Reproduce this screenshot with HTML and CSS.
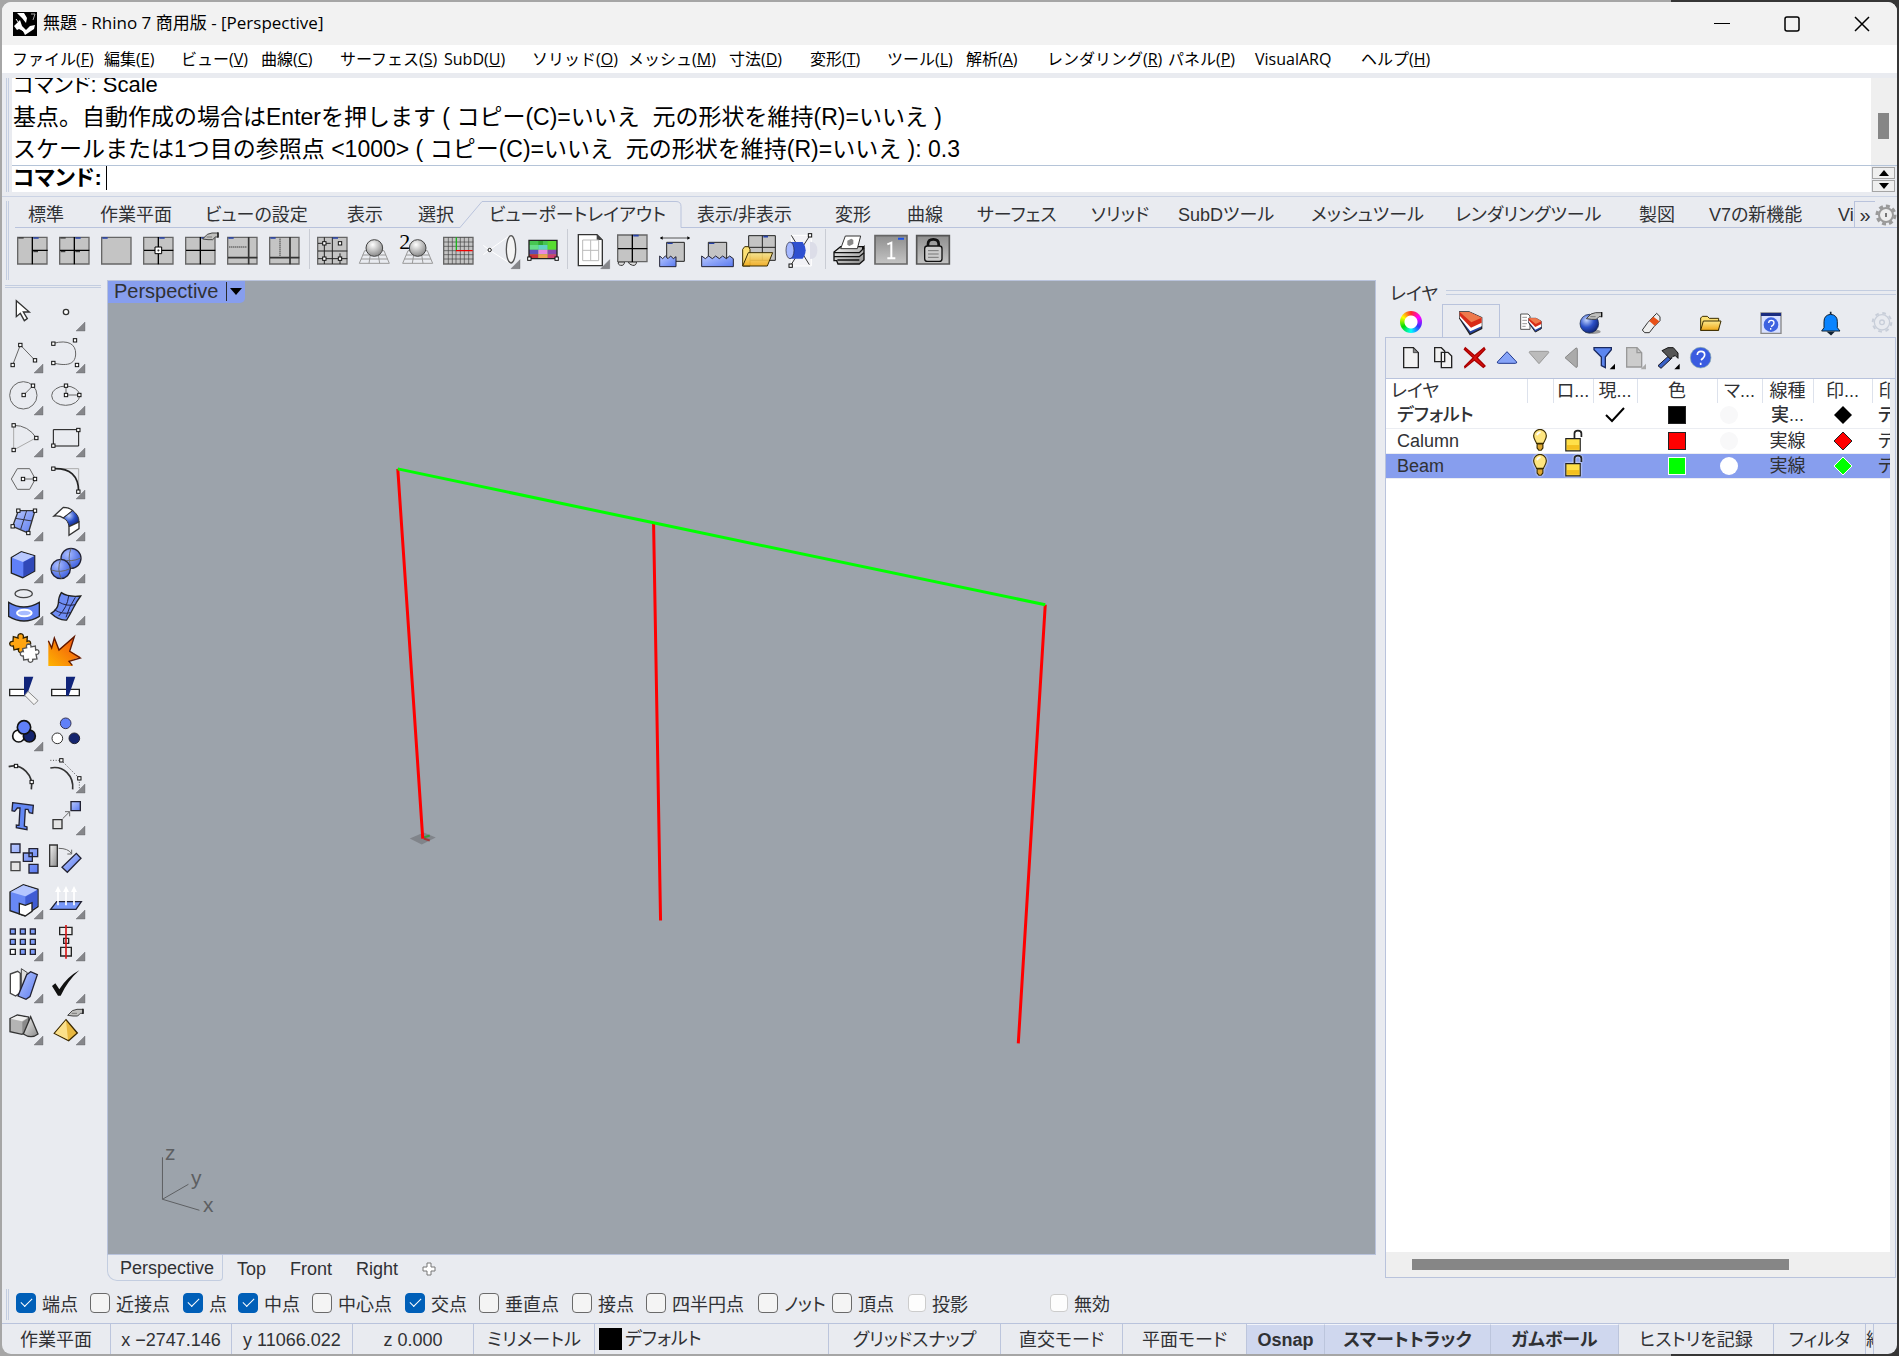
FILE: index.html
```html
<!DOCTYPE html>
<html lang="ja">
<head>
<meta charset="utf-8">
<title>無題 - Rhino 7 商用版 - [Perspective]</title>
<link rel="stylesheet" href="styles.css">
</head>
<body>
<svg width="0" height="0" class="defs" aria-hidden="true">
  <defs>
    <linearGradient id="gb" x1="0" y1="0" x2="1" y2="1"><stop offset="0" stop-color="#b9c9ff"/><stop offset="1" stop-color="#5a7af0"/></linearGradient>
    <linearGradient id="gg" x1="0" y1="0" x2="1" y2="1"><stop offset="0" stop-color="#f4f4f4"/><stop offset="1" stop-color="#8a8a8a"/></linearGradient>
    <linearGradient id="gy" x1="0" y1="0" x2="0" y2="1"><stop offset="0" stop-color="#fbe88c"/><stop offset="1" stop-color="#f0a818"/></linearGradient>
    <linearGradient id="go" x1="1" y1="0" x2="0" y2="1"><stop offset="0" stop-color="#f04a10"/><stop offset="1" stop-color="#ffb400"/></linearGradient>
    <linearGradient id="gs" x1="0" y1="0" x2="0" y2="1"><stop offset="0" stop-color="#8f8f8f"/><stop offset="1" stop-color="#c4c4c4"/></linearGradient>
    <radialGradient id="rb" cx=".35" cy=".3" r=".8"><stop offset="0" stop-color="#a9bcff"/><stop offset="1" stop-color="#3558dc"/></radialGradient>
    <radialGradient id="rd" cx=".35" cy=".3" r=".8"><stop offset="0" stop-color="#c4d6ff"/><stop offset=".5" stop-color="#2b50c8"/><stop offset="1" stop-color="#0a1c66"/></radialGradient>
    <radialGradient id="rg" cx=".4" cy=".3" r=".8"><stop offset="0" stop-color="#fff"/><stop offset="1" stop-color="#7a7a7a"/></radialGradient>
    <path id="tri" d="M123 93v27h-27z" fill="#85868a" stroke="#55565a" stroke-width="1"/>
    <rect id="h" x="-5" y="-5" width="10" height="10" fill="#fff" stroke="#111" stroke-width="3"/>
    <g id="bulb"><path d="M-6 4C-7 0-11-2-11-9a11 11 0 0 1 22 0C11-2 7 0 6 4z" fill="#ffe680" stroke="#3a2c00" stroke-width="2"/><path d="M-5 5h10v7l-3 4h-4l-3-4z" fill="#e0a830" stroke="#3a2c00" stroke-width="2"/><path d="M-5-10q1-5 6-5" stroke="#fff" stroke-width="3" fill="none"/></g>
    <g id="lock"><path d="M1-4v-9q0-5 6-5t6 5v6" fill="none" stroke="#222" stroke-width="3"/><path d="M-14-4h25v21h-25z" fill="#ffe04a" stroke="#222" stroke-width="2"/><path d="M-12 7h21v8h-21z" fill="#f4c020"/></g>
    <g id="four"><path d="M1 1h88v80h-88z" fill="#c4c4c4" stroke="#666" stroke-width="4"/></g>
    <g id="hand"><path d="M0 20l14-14 14-4h18v12h-8l-8 8H16z" fill="#c0c0be" stroke="#444" stroke-width="3"/><path d="M12 14h16" stroke="#555" stroke-width="2"/><path d="M46 0v16" stroke="#111" stroke-width="4"/></g>
    <g id="grid3d"><path d="M16 42h58l16 38H0zM10 55h70M5 67h80M35 42l-6 38M55 42l6 38" fill="none" stroke="#999" stroke-width="3"/><circle cx="45" cy="34" r="25" fill="url(#rg)" stroke="#444" stroke-width="3"/></g>
  </defs>
</svg>

<div class="window">
  <header class="title-bar">
    <svg class="logo" viewBox="0 0 24 24"><path d="M0 0h24v24H0z" fill="#000"/><path d="M4 1l5 5 4 5 1-5-3-5H4zM1 14l6-6 2 6 4 4 4-4 5-1-1 4-6 4-3 2-2-4-4-2-2 1z" fill="#fff"/><path d="M3 7l5 7M9 18l4 3" stroke="#fff" fill="none"/><path d="M18 2h4l-2 6" fill="none" stroke="#aaa"/></svg>
    <h1>無題 - Rhino 7 商用版 - [Perspective]</h1>
    <div class="caption">
      <button aria-label="最小化"><svg width="16" height="16"><path d="M0 7.500h16" stroke="#000"/></svg></button>
      <button aria-label="最大化"><svg width="16" height="16"><rect x="1" y="1" width="14" height="14" rx="2" fill="none" stroke="#000" stroke-width="1.500"/></svg></button>
      <button aria-label="閉じる"><svg width="16" height="16"><path d="M1 1l14 14M15 1L1 15" stroke="#000" stroke-width="1.500"/></svg></button>
    </div>
  </header>

  <nav class="menu">
    <button>ファイル(<u>F</u>)</button><button>編集(<u>E</u>)</button><button>ビュー(<u>V</u>)</button><button>曲線(<u>C</u>)</button><button>サーフェス(<u>S</u>)</button><button>SubD(<u>U</u>)</button><button>ソリッド(<u>O</u>)</button><button>メッシュ(<u>M</u>)</button><button>寸法(<u>D</u>)</button><button>変形(<u>T</u>)</button><button>ツール(<u>L</u>)</button><button>解析(<u>A</u>)</button><button>レンダリング(<u>R</u>)</button><button>パネル(<u>P</u>)</button><button>VisualARQ</button><button>ヘルプ(<u>H</u>)</button>
  </nav>

  <section class="command">
    <div class="history">
      <div class="log">
        <p class="tight">コマンド: Scale</p>
        <p>基点。自動作成の場合はEnterを押します ( コピー(C)=いいえ&nbsp; 元の形状を維持(R)=いいえ )</p>
        <p>スケールまたは1つ目の参照点 &lt;1000&gt; ( コピー(C)=いいえ&nbsp; 元の形状を維持(R)=いいえ ): 0.3</p>
      </div>
      <div class="v-scroll"><span></span></div>
    </div>
    <div class="prompt">
      <label for="cmd">コマンド:</label><span class="caret"></span><input id="cmd" type="text">
      <div class="spin">
        <button aria-label="前へ"><svg width="10" height="6"><path d="M5 0l5 6H0z"/></svg></button>
        <button aria-label="次へ"><svg width="10" height="6"><path d="M5 6l5-6H0z"/></svg></button>
      </div>
    </div>
  </section>

  <section class="toolbars">
    <div class="tool-tabs">
      <button>標準</button><button>作業平面</button><button>ビューの設定</button><button>表示</button><button>選択</button>
      <button class="active"><svg width="222" height="28"><path d="M0 26.500L22 .500H216q5 0 5 5V26.500V28H0z" fill="#e9ebf0"/><path d="M0 26.500L22 .500H216q5 0 5 5V26.500" fill="none" stroke="#b9c3dc"/></svg><span>ビューポートレイアウト</span></button>
      <button>表示/非表示</button><button>変形</button><button>曲線</button><button>サーフェス</button><button>ソリッド</button><button>SubDツール</button><button>メッシュツール</button><button>レンダリングツール</button><button>製図</button><button>V7の新機能</button><button class="cut">Vi</button>
      <button class="more" aria-label="その他のタブ">»</button>
      <button class="gear" aria-label="オプション"><svg width="22" height="22" viewBox="0 0 22 22"><circle cx="11" cy="11" r="9" fill="none" stroke="#9a9a9a" stroke-width="3" stroke-dasharray="4 3"/><circle cx="11" cy="11" r="7" fill="#eee" stroke="#9a9a9a" stroke-width="2"/><path d="M11 9v4" stroke="#777" stroke-width="2"/></svg></button>
    </div>
    <div class="tool-row">
      <button aria-label="3ビュー"><svg viewBox="36 117 126 126"><use href="#four" x="52" y="141"/><path d="M97 141v82M97 181h46" stroke="#000" stroke-width="4"/><path d="M100 144h16" stroke="#2540a8" stroke-width="5"/><path d="M55 144h16M100 185h14" stroke="#222" stroke-width="3"/></svg></button>
      <button aria-label="4ビュー"><svg viewBox="162 117 126 126"><use href="#four" x="178" y="141"/><path d="M223 141v82M180 181h88" stroke="#000" stroke-width="4"/><path d="M226 144h16" stroke="#2540a8" stroke-width="5"/><path d="M181 144h16M182 185h14M226 185h14" stroke="#222" stroke-width="3"/></svg></button>
      <button aria-label="最大化"><svg viewBox="288 117 126 126"><use href="#four" x="304" y="141"/><path d="M307 144h16" stroke="#2540a8" stroke-width="5"/></svg></button>
      <button aria-label="4ビューに戻す"><svg viewBox="414 117 126 126"><use href="#four" x="430" y="141"/><path d="M475 141v82M432 181h88" stroke="#000" stroke-width="4"/><path d="M478 144h16" stroke="#2540a8" stroke-width="5"/><path d="M465 171h20v20h-20z" fill="#fff" stroke="#000" stroke-width="3"/><path d="M472 181h7M475 178v7" stroke="#000" stroke-width="2"/></svg></button>
      <button aria-label="ビューのプロパティ"><svg viewBox="540 117 126 126"><use href="#four" x="556" y="141"/><path d="M601 141v82M558 181h88" stroke="#000" stroke-width="4"/><path d="M604 144h10" stroke="#2540a8" stroke-width="5"/><use href="#hand" x="608" y="127"/></svg></button>
      <button aria-label="水平に分割"><svg viewBox="666 117 126 126"><use href="#four" x="682" y="141"/><path d="M746 141v82M684 203h88" stroke="#333" stroke-width="5"/><path d="M688 171h54" stroke="#000" stroke-width="3" stroke-dasharray="3 3"/><path d="M685 144h16" stroke="#2540a8" stroke-width="5"/></svg></button>
      <button aria-label="垂直に分割"><svg viewBox="792 117 126 126"><use href="#four" x="808" y="141"/><path d="M870 141v82M810 203h88" stroke="#333" stroke-width="5"/><path d="M840 146v54" stroke="#000" stroke-width="3" stroke-dasharray="3 3"/><path d="M811 144h16" stroke="#2540a8" stroke-width="5"/></svg></button>
      <i></i>
      <button aria-label="ビューポートを揃える"><svg viewBox="936 117 126 126"><use href="#four" x="952" y="141"/><path d="M973 142v80M954 160h38M954 183h88M997 142v80M954 206h88M1020 190v32" stroke="#222" stroke-width="3"/><path d="M998 144h16" stroke="#2540a8" stroke-width="5"/><use href="#h" x="973" y="160"/><use href="#h" x="1020" y="160"/><use href="#h" x="973" y="206"/><use href="#h" x="1020" y="206"/></svg></button>
      <button aria-label="カメラを合わせる"><svg viewBox="1062 117 126 126"><use href="#grid3d" x="1078" y="140"/></svg></button>
      <button aria-label="2点パース"><svg viewBox="1188 117 126 126"><use href="#grid3d" x="1208" y="140"/><text x="1198" y="176" font-size="66" font-family="Liberation Serif, serif">2</text></svg></button>
      <button aria-label="グリッド"><svg viewBox="1314 117 126 126"><use href="#four" x="1330" y="141"/><path d="M1345 142v80M1357 142v80M1381 142v80M1393 142v80M1406 142v80M1332 156h88M1332 169h88M1332 194h88M1332 207h88M1368 182v40M1332 182h36" stroke="#444" stroke-width="2"/><path d="M1369 142v40" stroke="#1db41d" stroke-width="4"/><path d="M1368 182h50" stroke="#e00" stroke-width="4"/></svg></button>
      <button aria-label="レンズ長"><svg viewBox="0 117 126 126"><path d="M28 180L90 136M28 180l62 40M10 166l18 14-18 14" stroke="#fff" stroke-width="3" fill="none"/><circle cx="29" cy="180" r="5" fill="#fff" stroke="#222" stroke-width="3"/><ellipse cx="93" cy="178" rx="14" ry="41" fill="#f4f4f4" stroke="#555" stroke-width="4"/><use href="#tri" x="-3" y="116"/></svg></button>
      <button aria-label="背景ビットマップ"><svg viewBox="126 117 126 126"><path d="M147 151h84v55h-84z" fill="#47c552"/><path d="M175 151h14v14h-14z" fill="#2fa82f"/><path d="M147 165h28v14h-28z" fill="#66dd88"/><path d="M175 165h28v14h-28z" fill="#62d2c4"/><path d="M203 151h28v28h-28z" fill="#58dc30"/><path d="M147 179h28v14h-28z" fill="#5c50b8"/><path d="M175 179h28v14h-28z" fill="#e88ae0"/><path d="M203 179h28v14h-28z" fill="#8848b0"/><path d="M147 193h28v13h-28z" fill="#c83038"/><path d="M175 193h28v13h-28z" fill="#f0a050"/><path d="M203 193h28v13h-28z" fill="#d04070"/><path d="M147 151h84v55h-84z" fill="none" stroke="#222" stroke-width="4"/><use href="#h" x="148" y="206"/><use href="#h" x="230" y="206"/></svg></button>
      <i></i>
      <button aria-label="新規レイアウト"><svg viewBox="270 117 126 126"><path d="M295 134h56l16 16v77h-72z" fill="#fff" stroke="#333" stroke-width="4"/><path d="M350 134v16h17z" fill="#444"/><path d="M308 150h48v62h-48zM332 150v62M308 181h48" fill="none" stroke="#bbb" stroke-width="3"/><use href="#tri" x="266" y="116"/></svg></button>
      <button aria-label="ビューポートを読み込み"><svg viewBox="396 117 126 126"><path d="M416 216h18q-2 12-12 10t-6-10zm28 0h26q-2 12-12 10t-14-10z" fill="#ddd" stroke="#333" stroke-width="3"/><use href="#four" x="412" y="134"/><path d="M457 134v82M414 176h88" stroke="#000" stroke-width="4"/><path d="M460 137h16" stroke="#2540a8" stroke-width="5"/></svg></button>
      <button aria-label="幅の調整"><svg viewBox="522 117 126 126"><path d="M545 144h80" stroke="#555" stroke-width="3"/><path d="M539 144l9-5v10zM631 144l-9-5v10z"/><path d="M560 157h53v57h-53z" fill="#c4c4c4" stroke="#222" stroke-width="3"/><path d="M562 160h16" stroke="#2540a8" stroke-width="4"/><path d="M539 198l9 8 8-8 8 8 8-8 8 8 8-6v30h-49z" fill="url(#gb)" stroke="#223" stroke-width="3"/></svg></button>
      <button aria-label="フローティング"><svg viewBox="648 117 126 126"><path d="M685 157h55v57h-55z" fill="#c4c4c4" stroke="#222" stroke-width="3"/><path d="M687 160h16" stroke="#2540a8" stroke-width="4"/><path d="M665 198l11 8 10-8 11 8 10-8 11 8 10-8 11 8 10-8 11 8v24h-95z" fill="url(#gb)" stroke="#223" stroke-width="3"/></svg></button>
      <button aria-label="ビューを開く"><svg viewBox="774 117 126 126"><path d="M806 137h80v74h-80zM847 137v74M806 172h80" fill="#c4c4c4" stroke="#222" stroke-width="3"/><path d="M850 140h14" stroke="#2540a8" stroke-width="5"/><path d="M788 228v-50l6-8h12l4 8v50z" fill="#fbe074" stroke="#3a2c00" stroke-width="3"/><path d="M805 188h73l-16 40h-74z" fill="url(#gy)" fill-opacity=".9" stroke="#3a2c00" stroke-width="3"/></svg></button>
      <button aria-label="クリッピング平面"><svg viewBox="900 117 126 126"><path d="M934 136h60v92h-60z" fill="#f2f2f6" stroke="#fff" stroke-width="3"/><path d="M990 155q22 0 22 26t-22 26z" fill="#dcdde8"/><path d="M934 136l54 88M990 136l-58 90" stroke="#333" stroke-width="3"/><path d="M930 156h38q9 12 9 25t-9 25h-38z" fill="#2f50d0"/><ellipse cx="930" cy="181" rx="12" ry="25" fill="#a5b8ff" stroke="#223" stroke-width="2"/><use href="#h" x="990" y="136"/><use href="#h" x="932" y="227"/></svg></button>
      <i></i>
      <button aria-label="印刷"><svg viewBox="1044 117 126 126"><path d="M1062 186l20-16h66v4l4-4v40l-14 12h-64l-4-10h-8z" fill="url(#gg)" stroke="#111" stroke-width="4"/><path d="M1082 176l14-38h46l-10 38z" fill="#fff" stroke="#333" stroke-width="3"/><path d="M1102 152l12-6 6 4v12l-12 6-6-4z" fill="#888"/><path d="M1062 188h76l14-14M1062 200h76l14-12M1072 210h66" fill="none" stroke="#111" stroke-width="4"/></svg></button>
      <button aria-label="ビュー1"><svg viewBox="1170 117 126 126"><path d="M1185 137h96v85h-96z" fill="url(#gs)" stroke="#666" stroke-width="5"/><path d="M1254 146h18" stroke="#1a50e8" stroke-width="6"/><path d="M1222 163l12-5v46M1222 205h24" fill="none" stroke="#fff" stroke-width="6"/></svg></button>
      <button aria-label="ロック"><svg viewBox="1296 117 126 126"><path d="M1310 137h98v85h-98z" fill="url(#gs)" stroke="#555" stroke-width="5"/><path d="M1344 172v-10q0-14 16-14t16 14v10" fill="none" stroke="#111" stroke-width="8"/><rect x="1334" y="168" width="52" height="46" rx="8" fill="#ccc" stroke="#111" stroke-width="4"/><path d="M1344 182h32M1344 192h32M1344 202h32" stroke="#777" stroke-width="3"/></svg></button>
    </div>
  </section>

  <main>
    <aside class="palette">
      <button aria-label="選択"><svg viewBox="6 33 126 126"><path d="M49 62v48l12-10 12 22 9-6-12-20h18z" fill="#fff" stroke="#333" stroke-width="4"/></svg></button>
      <button aria-label="点"><svg viewBox="132 33 126 126"><circle cx="198" cy="96" r="8" fill="#fff" stroke="#333" stroke-width="4"/><use href="#tri" x="132" y="33"/></svg></button>
      <button aria-label="ポリライン"><svg viewBox="6 159 126 126"><path class="l" d="M38 255l23-60 44 46"/><use href="#h" x="38" y="255"/><use href="#h" x="61" y="195"/><use href="#h" x="105" y="241"/><use href="#tri" x="6" y="159"/></svg></button>
      <button aria-label="曲線"><svg viewBox="132 159 126 126"><path class="l" d="M160 190c45-12 68 3 67 32-1 34-30 36-67 27"/><use href="#h" x="160" y="191"/><use href="#h" x="225" y="181"/><use href="#h" x="160" y="249"/><use href="#h" x="231" y="255"/><use href="#tri" x="132" y="159"/></svg></button>
      <button aria-label="円"><svg viewBox="6 285 126 126"><circle class="l" cx="70" cy="346" r="41"/><path class="l" d="M71 345l28-28"/><use href="#h" x="71" y="345"/><use href="#h" x="99" y="317"/><use href="#tri" x="6" y="285"/></svg></button>
      <button aria-label="楕円"><svg viewBox="132 285 126 126"><ellipse class="l" cx="197" cy="347" rx="42" ry="29"/><path class="l" d="M198 317v28h40"/><use href="#h" x="198" y="317"/><use href="#h" x="198" y="345"/><use href="#h" x="238" y="345"/><use href="#tri" x="132" y="285"/></svg></button>
      <button aria-label="円弧"><svg viewBox="6 411 126 126"><path d="M41 436v74l68-37" fill="none" stroke="#aaa" stroke-width="3"/><path class="l" d="M41 436q44 0 68 38"/><use href="#h" x="41" y="436"/><use href="#h" x="109" y="474"/><use href="#h" x="41" y="510"/><use href="#tri" x="6" y="411"/></svg></button>
      <button aria-label="長方形"><svg viewBox="132 411 126 126"><path class="l k" d="M160 449h76v49h-76z"/><use href="#h" x="235" y="450"/><use href="#h" x="160" y="497"/><use href="#tri" x="132" y="411"/></svg></button>
      <button aria-label="多角形"><svg viewBox="6 537 126 126"><path class="l" d="M34 597l18-31h37l17 31-17 31H52z"/><path class="l" d="M69 597h36"/><use href="#h" x="69" y="597"/><use href="#h" x="105" y="597"/><use href="#tri" x="6" y="537"/></svg></button>
      <button aria-label="フィレット"><svg viewBox="132 537 126 126"><path d="M160 566h76v70" fill="none" stroke="#aaa" stroke-width="3"/><path d="M160 566c50-2 76 20 76 70" fill="none" stroke="#222" stroke-width="5"/><use href="#tri" x="132" y="537"/><use href="#h" x="160" y="566"/><use href="#h" x="235" y="635"/></svg></button>
      <button aria-label="サーフェス"><svg viewBox="6 663 126 126"><path d="M55 692h50l-20 67-47-20z" fill="url(#gb)" stroke="#333" stroke-width="4"/><path d="M80 692l-18 56M46 715l50 8" stroke="#334" stroke-width="3"/><use href="#h" x="55" y="692"/><use href="#h" x="105" y="692"/><use href="#h" x="38" y="739"/><use href="#h" x="85" y="759"/><use href="#tri" x="6" y="663"/></svg></button>
      <button aria-label="フィレットサーフェス"><svg viewBox="132 663 126 126"><path d="M162 708l28-26q18 0 28 10l-28 22q-10-8-28-6z" fill="#fff" stroke="#333" stroke-width="4"/><path d="M190 714l28-22q20 14 19 34l-30 14q-2-18-17-26z" fill="url(#rd)" stroke="#333" stroke-width="3"/><path d="M207 740l30-14v20l-30 20z" fill="#fff" stroke="#333" stroke-width="4"/><use href="#tri" x="132" y="663"/></svg></button>
      <button aria-label="直方体"><svg viewBox="6 789 126 126"><path d="M34 833l30-18 40 12v46l-36 20-34-14z" fill="#6080f8" stroke="#222" stroke-width="4"/><path d="M36 833l28-16 38 11-33 18z" fill="#b9c9ff"/><path d="M70 846l33-17v43l-33 19z" fill="#3048b8"/><use href="#tri" x="6" y="789"/></svg></button>
      <button aria-label="球"><svg viewBox="132 789 126 126"><circle cx="213" cy="835" r="30" fill="url(#rb)" stroke="#223" stroke-width="4"/><path class="l" d="M184 838q30 10 58-4M213 805q-12 30 2 60"/><circle cx="182" cy="867" r="29" fill="url(#rb)" stroke="#223" stroke-width="4"/><path class="l" d="M154 870q28 10 56-4M182 838q-12 30 2 58"/><use href="#tri" x="132" y="789"/></svg></button>
      <button aria-label="押し出し"><svg viewBox="6 915 126 126"><ellipse cx="71" cy="941" rx="26" ry="12" fill="none" stroke="#444" stroke-width="4"/><path d="M26 967q45 28 92 0v42q-46 28-92 0z" fill="#6080f0" stroke="#222" stroke-width="4"/><ellipse cx="73" cy="999" rx="22" ry="10" fill="#a8bcff" stroke="#fff" stroke-width="6"/><use href="#tri" x="6" y="915"/></svg></button>
      <button aria-label="パッチ"><svg viewBox="132 915 126 126"><path d="M184 938q20 14 58 10-12 16-22 36t-20 36q-24 2-47-20 20-12 22-30 0-18 9-32z" fill="#6f8df5" stroke="#222" stroke-width="4"/><path d="M176 966q24 14 50 8M164 990q24 14 48 8M206 948q-4 34-30 60M226 952q-20 30-28 60" fill="none" stroke="#224" stroke-width="3"/><use href="#tri" x="132" y="915"/></svg></button>
      <button aria-label="結合"><svg viewBox="6 1041 126 126"><path d="M40 1070l14 4q-2-12 8-13 10 1 8 13l12-4-1 14q10-4 11 6-1 8-10 8l4 12-16-2q2 10-8 10-9-1-6-12l-14 4-2-12q-10 2-11-7 1-8 10-7z" fill="#ffa510" stroke="#332200" stroke-width="4"/><path d="M68 1106l12-3q-3-9 5-11 9 0 8 9l13-3 1 12q9-3 10 6-1 8-9 7l3 14-13 1q2 8-7 9-8-1-6-9l-14 2-1-12q-9 1-9-7 1-8 9-6z" fill="#fff" stroke="#555" stroke-width="4"/></svg></button>
      <button aria-label="分解"><svg viewBox="132 1041 126 126"><path d="M145 1158v-76l10 20 8-28 14 34 46-38-14 42 32 18-34 14 12 14z" fill="url(#go)"/><path d="M145 1082l10 22 8-30 14 36 46-40-14 44 32 20-34 10 10 12" fill="none" stroke="#601800" stroke-width="4"/></svg></button>
      <button aria-label="トリム"><svg viewBox="6 27 126 126"><path d="M29 88h46v19H29z" fill="#fff" stroke="#222" stroke-width="4"/><path d="M72 50h28l-20 57h-8z" fill="#10247a"/><path d="M84 94l30 28-12 12-28-28z" fill="#f4f4f4" stroke="#888" stroke-width="3"/></svg></button>
      <button aria-label="分割"><svg viewBox="132 27 126 126"><path d="M155 88h83v19h-83z" fill="#fff" stroke="#222" stroke-width="4"/><path d="M198 50h28l-20 57h-8z" fill="#10247a"/></svg></button>
      <button aria-label="和"><svg viewBox="6 153 126 126"><circle cx="56" cy="228" r="18" fill="#fff" stroke="#111" stroke-width="5"/><circle cx="88" cy="228" r="18" fill="#14246e" stroke="#111" stroke-width="5"/><circle cx="72" cy="202" r="20" fill="#6080f8" stroke="#111" stroke-width="5"/><use href="#tri" x="6" y="153"/></svg></button>
      <button aria-label="グループ解除"><svg viewBox="132 153 126 126"><circle cx="197" cy="190" r="16" fill="#6080f8" stroke="#335" stroke-width="3"/><circle cx="172" cy="235" r="16" fill="#fff" stroke="#333" stroke-width="3"/><circle cx="223" cy="235" r="16" fill="#14246e" stroke="#223" stroke-width="3"/></svg></button>
      <button aria-label="点を編集"><svg viewBox="6 279 126 126"><path d="M26 320q30-8 52 14t16 54" fill="none" stroke="#333" stroke-width="5"/><use href="#h" x="48" y="318"/><use href="#h" x="95" y="366"/></svg></button>
      <button aria-label="制御点"><svg viewBox="132 279 126 126"><path d="M151 324q30-6 50 14t17 50" fill="none" stroke="#333" stroke-width="5"/><path d="M151 301h33l54 54v32" fill="none" stroke="#555" stroke-width="3" stroke-dasharray="3 5"/><use href="#h" x="184" y="301"/><use href="#h" x="238" y="355"/><use href="#tri" x="132" y="279"/></svg></button>
      <button aria-label="テキスト"><svg viewBox="6 405 126 126"><path d="M38 428l62 8-2 24-10-2-4-10h-8l-3 50 8 3v8l-32-6v-8l8 1 3-52h-8l-8 10-8-2z" fill="#6488f4" stroke="#223" stroke-width="4"/></svg></button>
      <button aria-label="移動"><svg viewBox="132 405 126 126"><path d="M159 479h27v27h-27z" fill="#e4e4e4" stroke="#333" stroke-width="4"/><path d="M213 425h28v27h-28z" fill="url(#gb)" stroke="#223" stroke-width="4"/><path class="l" d="M188 476l20-20M195 455h14v14"/><use href="#tri" x="132" y="405"/></svg></button>
      <button aria-label="コピー"><svg viewBox="6 531 126 126"><path d="M33 552h27v26H33zM87 566h26v24H87zM70 579h27v25H70zM87 613h27v26H87z" fill="url(#gb)" stroke="#223" stroke-width="4"/><path d="M33 606h27v26H33z" fill="#e4e4e4" stroke="#444" stroke-width="4"/></svg></button>
      <button aria-label="回転"><svg viewBox="132 531 126 126"><path d="M149 555h23v64h-23z" fill="url(#gg)" stroke="#333" stroke-width="4"/><path class="l" d="M176 565q28 0 38 15M202 582h13v-13"/><path d="M229 580l14 15-41 42-16-15z" fill="url(#gb)" stroke="#223" stroke-width="4"/></svg></button>
      <button aria-label="ソリッド編集"><svg viewBox="6 657 126 126"><path d="M30 696l40-22 44 14v52l-40 27-44-15z" fill="#6888f4" stroke="#222" stroke-width="4"/><path d="M32 696l38-20 42 13-36 20z" fill="#b4c6ff"/><path d="M76 710l36-20v48l-36 26z" fill="#3f5cd4"/><path d="M58 730l18 6 20-8v26l-20 14-18-6z" fill="#fff" stroke="#222" stroke-width="4"/><use href="#tri" x="6" y="657"/></svg></button>
      <button aria-label="面を押し出し"><svg viewBox="132 657 126 126"><path d="M170 725h74l-16 23h-76z" fill="#7898fa" stroke="#223" stroke-width="4"/><path d="M174 736v-50M198 736v-50M222 736v-50" stroke="#fff" stroke-width="5"/><path d="M165 696l9-18 9 18zM189 696l9-18 9 18zM213 696l9-18 9 18z" fill="#fff"/><use href="#tri" x="132" y="657"/></svg></button>
      <button aria-label="配列"><svg viewBox="6 783 126 126"><path d="M31 807h15v15H31zM61 807h15v15H61zM91 807h15v15H91zM31 838h15v15H31zM61 838h15v15H61zM91 838h15v15H91zM61 868h15v15H61zM91 868h15v15H91z" fill="#7f9df8" stroke="#223" stroke-width="4"/><path d="M31 868h15v15H31z" fill="#fff" stroke="#222" stroke-width="4"/><use href="#tri" x="6" y="783"/></svg></button>
      <button aria-label="整列"><svg viewBox="132 783 126 126"><path d="M179 802h37v22h-37zM191 835h15v15h-15zM182 862h32v26h-32z" fill="#eee" stroke="#222" stroke-width="4"/><path d="M198 795v101" stroke="#d81818" stroke-width="5"/><use href="#tri" x="132" y="783"/></svg></button>
      <button aria-label="変形"><svg viewBox="6 909 126 126"><path d="M31 942l22-8 8 6v58l-14 10-16-8z" fill="#fff" stroke="#444" stroke-width="4"/><path d="M64 926l18 12-12 44-6 6z" fill="#ddd" stroke="#444" stroke-width="3"/><path d="M80 944l12-9 20 9-22 66-12 8-24-10z" fill="url(#gb)" stroke="#223" stroke-width="4"/><use href="#tri" x="6" y="909"/></svg></button>
      <button aria-label="確認"><svg viewBox="132 909 126 126"><path d="M156 978l10-8 12 18q24-38 60-57-34 30-56 76h-8z" fill="#111"/><use href="#tri" x="132" y="909"/></svg></button>
      <button aria-label="シェーディング"><svg viewBox="6 1035 126 126"><path d="M30 1076l22-11 34 6v36l-20 16-36-8z" fill="#b4b4b4" stroke="#333" stroke-width="4"/><path d="M32 1076l20-9 32 6-18 11z" fill="#f0f0f0"/><path d="M67 1086l18-13v34l-18 14z" fill="#8a8a8a"/><path d="M92 1070l22 52q-20 16-44 0z" fill="url(#gg)" stroke="#333" stroke-width="4"/><use href="#tri" x="6" y="1035"/></svg></button>
      <button aria-label="プロパティ"><svg viewBox="132 1035 126 126"><path d="M198 1079l34 40-26 23-43-22z" fill="#e8b840" stroke="#3a2800" stroke-width="4"/><path d="M198 1081l6 58-39-19z" fill="#fbe08a"/><use href="#hand" x="203" y="1046"/><use href="#tri" x="132" y="1035"/></svg></button>
    </aside>

    <section class="view">
      <div class="canvas">
        <svg class="scene" viewBox="108 281 1268 973" preserveAspectRatio="xMinYMin meet">
          <path d="M410 839l14-6 12 5-14 7z" fill="#80848a"/><path d="M424 838l6-2" stroke="#3a9a3a" stroke-width="2"/><path d="M424 839l6 2" stroke="#a03a3a" stroke-width="2"/>
          <path d="M398 469l25 370M654 523l7 398M1046 605l-27 439" stroke="#f00" stroke-width="3" fill="none"/>
          <path d="M398 469l256 54 392 82" stroke="#0f0" stroke-width="3" fill="none"/>
          <path d="M162.500 1158v42l26-15M162.500 1200l37 11" stroke="#5d5f62" fill="none"/>
          <g fill="#5d5f62" font-family="Liberation Sans, sans-serif" font-size="21"><text x="165" y="1161">z</text><text x="191" y="1186">y</text><text x="203" y="1213">x</text></g>
        </svg>
        <button class="view-title">Perspective<span></span><svg width="12" height="7"><path d="M0 0h12l-6 7z"/></svg></button>
      </div>
      <div class="view-tabs">
        <button class="current">Perspective</button><button>Top</button><button>Front</button><button>Right</button>
        <button aria-label="追加"><svg width="14" height="14"><path d="M5 1h4v4h4v4H9v4H5V9H1V5h4z" fill="#fff" stroke="#777"/></svg></button>
      </div>
    </section>

    <aside class="panel">
      <h2>レイヤ</h2>
      <div class="panel-tabs">
        <button aria-label="表示"><span class="wheel"></span></button>
        <button class="on" aria-label="レイヤ"><svg viewBox="242 104 108 96"><path d="M262 125h28l38 17v33l-35 17-31-48z" fill="#2444a4" stroke="#222" stroke-width="4"/><path d="M262 125h28l38 17v26l-34 15-32-41z" fill="#fff"/><path d="M262 125h28l38 17v15l-32 15-34-36z" fill="#d82c18"/><path d="M262 125h28l38 17-31 14z" fill="#ee7a4c"/></svg></button>
        <button aria-label="名前付きビュー"><svg viewBox="421 104 108 96"><path d="M444 131h22l6 6v40h-28z" fill="#fff" stroke="#555" stroke-width="3"/><path d="M449 141h14M449 150h14M449 160h14M449 168h10" stroke="#666" stroke-width="2"/><path d="M468 144h22l16 9v22l-18 10-20-28z" fill="#2444a4" stroke="#222" stroke-width="3"/><path d="M468 144h22l16 9v16l-18 9-20-24z" fill="#fff"/><path d="M468 144h22l16 9v8l-18 9-20-20z" fill="#d82c18"/><path d="M468 144h22l16 9-17 8z" fill="#ee7a4c"/></svg></button>
        <button aria-label="マテリアル"><svg viewBox="599 104 108 96"><ellipse cx="658" cy="184" rx="24" ry="7" fill="#999"/><circle cx="648" cy="160" r="28" fill="url(#rd)" stroke="#124" stroke-width="2"/><use href="#hand" x="639" y="125"/></svg></button>
        <button aria-label="注釈"><svg viewBox="777 104 108 96"><path d="M848 129l10 10v12l-18 18-14 18h-14l-7-8 16-22z" fill="#eee" stroke="#333" stroke-width="3"/><path d="M838 139l18 14-14 13-16-14z" fill="#e85018"/></svg></button>
        <button aria-label="ライブラリ"><svg viewBox="953 104 108 96"><path d="M976 180v-37l5-5h15l6 6h28v36z" fill="#fbe074" stroke="#3a2c00" stroke-width="3"/><path d="M984 152h53l-8 28h-53z" fill="url(#gy)" stroke="#3a2c00" stroke-width="3"/></svg></button>
        <button aria-label="ヘルプ"><svg viewBox="1132 104 108 96"><path d="M1156 128h60v61h-60z" fill="#d8e0ff" stroke="#888" stroke-width="4"/><path d="M1156 128h60v9h-60z" fill="#1a2c80"/><circle cx="1186" cy="163" r="22" fill="#3e62e0"/><path d="M1179 158q0-8 8-8t8 7-9 12M1185 173v5" fill="none" stroke="#fff" stroke-width="4"/></svg></button>
        <button aria-label="通知"><svg viewBox="1310 104 108 96"><path d="M1336 182l7-10v-18q0-20 20-22 20 2 20 22v18l8 10z" fill="#0a84ff" stroke="#123" stroke-width="3"/><path d="M1363 124v8M1357 186h13l-6 6z" stroke="#123" stroke-width="5"/></svg></button>
        <button aria-label="パネル設定"><svg viewBox="1469 104 108 96"><circle cx="1523" cy="156" r="28" fill="none" stroke="#c8ced9" stroke-width="6" stroke-dasharray="11 11"/><circle cx="1523" cy="156" r="23" fill="none" stroke="#c8ced9" stroke-width="4"/><circle cx="1523" cy="156" r="7" fill="none" stroke="#c8ced9" stroke-width="4"/></svg></button>
      </div>
      <div class="panel-body">
        <div class="panel-tools">
          <button aria-label="新規レイヤ"><svg viewBox="71 208 96 114"><path d="M97 234h29l15 15v45H97z" fill="#f2f2f2" stroke="#222" stroke-width="4"/><path d="M126 234v15h15z" fill="#888" stroke="#222" stroke-width="2"/></svg></button>
          <button aria-label="サブレイヤ"><svg viewBox="164 208 96 114"><path d="M187 234h20l10 10v32h-30zM207 248h20l11 11v35h-31z" fill="#f2f2f2" stroke="#222" stroke-width="4"/></svg></button>
          <button aria-label="削除"><svg viewBox="263 208 96 114"><path d="M282 234l28 24 28-24 3 5-24 25 24 25-5 4-27-22-28 23-1-4 26-26-27-25z" fill="#d8100c" stroke="#a00" stroke-width="4"/></svg></button>
          <button aria-label="上へ"><svg viewBox="358 208 96 114"><path d="M406 246l29 31q1 4-4 4h-50q-5 0-4-4z" fill="#86a4f8" stroke="#223a90" stroke-width="3"/></svg></button>
          <button aria-label="下へ"><svg viewBox="455 208 96 114"><path d="M503 282l-29-33q-1-4 4-4h50q5 0 4 4z" fill="#bbb" stroke="#999" stroke-width="3"/></svg></button>
          <button aria-label="上の階層へ"><svg viewBox="551 208 96 114"><path d="M581 264l33-29q4-1 4 4v50q0 5-4 4z" fill="#aaa" stroke="#888" stroke-width="3"/></svg></button>
          <button aria-label="フィルタ"><svg viewBox="648 208 96 114"><path d="M669 234h52v6l-18 22v32l-12-6v-26l-22-22z" fill="#5c86f0" stroke="#1a2a60" stroke-width="4"/><path d="M732 282v17h-16z"/></svg></button>
          <button aria-label="レイヤ状態"><svg viewBox="746 208 96 114"><path d="M769 234h31l14 15v43h-45z" fill="#ccc" stroke="#999" stroke-width="4"/><path d="M800 234v15h14" fill="none" stroke="#999" stroke-width="4"/><path d="M827 282v17h-16z" fill="#aaa"/></svg></button>
          <button aria-label="ツール"><svg viewBox="838 208 96 114"><path d="M892 258l8 8-32 30-9-8z" fill="#3a62c8" stroke="#112" stroke-width="3"/><path d="M871 243l18-9h16l14 16v16l-8-8-7 2-8 8-16-16z" fill="#555" stroke="#111" stroke-width="3"/><path d="M924 282v17h-16z"/></svg></button>
          <button aria-label="ヘルプ"><svg viewBox="931 208 96 114"><circle cx="984" cy="264" r="31" fill="#3a5ce0" stroke="#8aa" stroke-width="2"/><path d="M974 256q0-11 11-11t11 10q0 7-11 16M984 279v7" fill="none" stroke="#fff" stroke-width="5"/></svg></button>
        </div>
        <div class="layer-list">
          <table>
            <colgroup><col class="c-name"><col class="c-on"><col class="c-lock"><col class="c-cur"><col class="c-color"><col class="c-mat"><col class="c-line"><col class="c-print"><col class="c-last"></colgroup>
            <thead><tr><th class="name">レイヤ</th><th></th><th>ロ...</th><th>現...</th><th>色</th><th>マ...</th><th>線種</th><th>印...</th><th class="last">印</th></tr></thead>
            <tbody>
              <tr class="bold"><td class="name">デフォルト</td><td></td><td></td><td><svg width="22" height="18"><path d="M2 9l6 6L20 2" fill="none" stroke="#000" stroke-width="2"/></svg></td><td><span class="swatch black"></span></td><td><span class="dot"></span></td><td>実...</td><td><svg width="20" height="20"><path d="M10 1l9 9-9 9-9-9z"/></svg></td><td class="last">デ</td></tr>
              <tr><td class="name">Calumn</td><td><svg width="18" height="24" viewBox="-20 -27 40 54"><use href="#bulb" transform="scale(1.300)"/></svg></td><td><svg width="24" height="24" viewBox="-28 -27 52 54"><use href="#lock" transform="scale(1.300)"/></svg></td><td></td><td><span class="swatch red"></span></td><td><span class="dot"></span></td><td>実線</td><td><svg width="20" height="20"><path d="M10 1l9 9-9 9-9-9z" fill="red" stroke="#222"/></svg></td><td class="last">デ</td></tr>
              <tr class="selected"><td class="name">Beam</td><td><svg class="halo" width="18" height="24" viewBox="-20 -27 40 54"><use href="#bulb" transform="scale(1.300)"/></svg></td><td><svg class="halo" width="24" height="24" viewBox="-28 -27 52 54"><use href="#lock" transform="scale(1.300)"/></svg></td><td></td><td><span class="swatch lime"></span></td><td><span class="dot lit"></span></td><td>実線</td><td><svg width="20" height="20"><path d="M10 1l9 9-9 9-9-9z" fill="lime" stroke="#fff"/></svg></td><td class="last">デ</td></tr>
            </tbody>
          </table>
          <div class="h-scroll"><span></span></div>
        </div>
      </div>
    </aside>
  </main>

  <section class="osnap">
    <label class="n2"><input type="checkbox" checked>端点</label><label class="n3"><input type="checkbox">近接点</label><label class="n1"><input type="checkbox" checked>点</label><label class="n2"><input type="checkbox" checked>中点</label><label class="n3"><input type="checkbox">中心点</label><label class="n2"><input type="checkbox" checked>交点</label><label class="n3"><input type="checkbox">垂直点</label><label class="n2"><input type="checkbox">接点</label><label class="n4"><input type="checkbox">四半円点</label><label class="n2"><input type="checkbox">ノット</label><label class="n2"><input type="checkbox">頂点</label><label class="soft n5"><input type="checkbox">投影</label><label class="soft n2"><input type="checkbox">無効</label>
  </section>

  <footer class="status">
    <button>作業平面</button><span>x −2747.146</span><span>y 11066.022</span><span>z 0.000</span><button>ミリメートル</button><button class="layer"><i></i>デフォルト</button><button>グリッドスナップ</button><button>直交モード</button><button>平面モード</button><button class="on">Osnap</button><button class="on">スマートトラック</button><button class="on">ガムボール</button><button>ヒストリを記録</button><button>フィルタ</button><button class="clip">絶</button><span></span>
  </footer>
</div>
</body>
</html>
```
FILE: styles.css
```css
* { box-sizing: border-box; }

body {
  margin: 0;
  padding: 2px;
  background: linear-gradient(to right, #a6a6a6 88%, #363636 88%);
  color: #303134;
  font-family: "Liberation Sans", "Noto Sans CJK JP", sans-serif;
  font-size: 18px;
  font-feature-settings: "palt";
}

button {
  margin: 0;
  padding: 0;
  border: 0;
  background: none;
  color: inherit;
  font: inherit;
  font-feature-settings: inherit;
  white-space: nowrap;
}

svg { display: block; }
.defs { position: absolute; }

.window {
  display: flex;
  flex-direction: column;
  min-height: calc(100vh - 4px);
  overflow: hidden;
  border-radius: 9px;
  background: #e9ebf0;
}

/* Title bar */
.title-bar {
  display: flex;
  align-items: center;
  height: 43px;
  padding-left: 11px;
  background: #f2f2f2;
}
.logo { width: 24px; height: 24px; margin-right: 6px; }
h1 {
  flex: 1;
  margin: 0;
  padding-bottom: 2px;
  color: #000;
  font: 400 17px/24px "Open Sans", "Noto Sans CJK JP", sans-serif;
}
.caption { display: flex; }
.caption button { width: 70px; height: 41px; display: grid; place-items: center; }

/* Menu */
.menu {
  display: grid;
  grid-template-columns: 92px 77px 80px 79px 104px 88px 96px 101px 81px 77px 79px 81px 121px 87px 106px 86px;
  height: 28px;
  padding-left: 1px;
  background: #fff;
}
.menu button {
  padding-left: 9px;
  color: #000;
  font: 400 16px/28px "Open Sans", "Noto Sans CJK JP", sans-serif;
  text-align: left;
}

/* Command area */
.command {
  margin-top: 5px;
  margin-left: 4px;
  border-left: 3px double #c3cde0;
  padding-left: 3px;
  color: #000;
  font-size: 23px;
}
.history { display: flex; height: 88px; border-bottom: 1px solid #b5c4d8; background: #fff; }
.log { flex: 1; display: flex; flex-direction: column; justify-content: flex-end; overflow: hidden; font-feature-settings: normal; }
.log p { flex: none; margin: 0; padding-left: 1px; line-height: 32px; white-space: nowrap; }
.log .tight { font-size: 22px; font-feature-settings: "palt"; }
.v-scroll { width: 26px; padding: 35px 8px 0 7px; background: #efefef; }
.v-scroll span { display: block; height: 26px; background: #868686; }
.prompt { display: flex; height: 26px; background: #fff; }
.prompt label { padding-left: 1px; font-size: 22px; font-weight: 700; line-height: 24px; }
.caret { width: 1px; height: 24px; margin-left: 4px; background: #000; }
.prompt input { flex: 1; min-width: 0; padding: 0; border: 0; outline: 0; font: inherit; }
.spin { display: grid; gap: 1px; width: 26px; padding: 1px 2px 0 1px; background: #e9ebf0; }
.spin button { display: grid; place-items: center; border: 1px solid #a5a5a5; background: #efefef; }

/* Tabbed toolbars */
.toolbars { margin-top: 4px; padding: 4px 0 0 4px; border-top: 1px solid #cbd3e4; }
.tool-tabs {
  display: grid;
  grid-template-columns: 72px 105px 142px 71px 57px 222px 138px 72px 70px 114px 87px 133px 144px 184px 70px 129px 31px 21px 1fr;
  height: 28px;
  border-left: 3px double #c3cde0;
  padding-left: 4px;
  background: linear-gradient(#b9c3dc, #b9c3dc) 6px 26px / 100% 1px no-repeat;
}
.tool-tabs button { padding-left: 15px; line-height: 27px; text-align: left; }
.tool-tabs .active { position: relative; padding-left: 29px; }
.active svg { position: absolute; left: 0; top: 0; }
.active span { position: relative; }
.tool-tabs .cut { overflow: hidden; }
.tool-tabs .more { height: 27px; padding: 0; border: solid #b9c3dc; border-width: 1px 0 1px 1px; text-align: center; font-size: 20px; line-height: 22px; }
.tool-tabs .gear { padding: 2px 0 0; height: 25px; }
.tool-row { display: flex; height: 51px; border-left: 3px double #c3cde0; padding-left: 3px; }
.tool-row button { width: 42px; height: 42px; }
.tool-row i { width: 1px; height: 40px; margin: 0 2px 0 3px; background: #c9ccd4; }
.tool-row svg { width: 42px; height: 42px; }

/* Work area */
main { flex: 1; display: flex; min-height: 0; }

.palette {
  display: grid;
  grid-template-columns: 42px 42px;
  grid-auto-rows: 42px;
  align-content: start;
  width: 105px;
  padding-top: 11px;
  background: linear-gradient(#c3cde0 1px, transparent 1px 2px, #c3cde0 2px) 3px 5px / 96px 3px no-repeat;
}
.palette svg { width: 42px; height: 42px; }
.l { fill: none; stroke: #666; stroke-width: 3; }
.k { stroke: #111; }

.view { flex: 1; display: flex; flex-direction: column; min-width: 0; }
.canvas {
  position: relative;
  flex: 1;
  border: 1px solid #b9c3dc;
  background: #9ca3ab;
  min-height: 0;
}
.scene { position: absolute; width: 100%; height: 100%; }
.view-title {
  position: absolute;
  display: flex;
  align-items: center;
  height: 22px;
  padding: 0 3px 2px 6px;
  border-bottom-right-radius: 5px;
  background: #879eee;
  font-size: 20px;
}
.view-title span { width: 1px; height: 19px; margin: 0 3px 0 7px; background: #2a2b2e; }
.view-tabs { display: flex; height: 27px; }
.view-tabs button { padding: 0 6px; margin-right: 12px; line-height: 26px; }
.view-tabs .current {
  height: 26px;
  margin-right: 8px;
  padding: 0 8px 0 12px;
  border: solid #c3cde0;
  border-width: 0 1px 1px;
  border-radius: 0 0 4px 10px;
}

/* Layer panel */
.panel { display: flex; flex-direction: column; width: 511px; margin: 0 1px 4px 9px; }
.panel h2 {
  display: flex;
  align-items: center;
  gap: 8px;
  height: 24px;
  margin: 0;
  padding-left: 5px;
  font-size: 18px;
  font-weight: 400;
}
.panel h2::after { content: ""; flex: 1; height: 3px; border: solid #c3cde0; border-width: 1px 0; }
.panel-tabs { display: flex; height: 33px; overflow: hidden; }
.panel-tabs button { display: grid; place-items: center; flex: 0 0 58px; margin-right: 2px; }
.panel-tabs svg { width: 36px; height: 32px; }
.panel-tabs .wheel { margin: 2px 3px 0 0; }
.panel-tabs button:first-child { flex-basis: 55px; }
.panel-tabs .on { border: solid #b9c3dc; border-width: 1px 1px 0; background: #e9ebf0; }
.panel-tabs button:last-child { flex-basis: 40px; margin: 0; }
.wheel {
  width: 22px;
  height: 22px;
  border-radius: 50%;
  background: radial-gradient(#fff 6px, transparent 7px), conic-gradient(#ff2a2a, #f0f, #33f, #0ff, #0d0, #ff0, #ff2a2a);
}
.panel-body { flex: 1; display: flex; flex-direction: column; border: 1px solid #b9c3dc; }
.panel-tools { display: flex; height: 41px; padding-left: 9px; border-bottom: 1px solid #b9c3dc; }
.panel-tools svg { width: 32px; height: 38px; }
.layer-list { flex: 1; display: flex; flex-direction: column; justify-content: space-between; margin-right: 5px; background: #fff; overflow: hidden; }

table { width: 100%; table-layout: fixed; border-collapse: collapse; }
.c-name { width: 141px; }
.c-on { width: 26px; }
.c-lock { width: 40px; }
.c-cur { width: 44px; }
.c-color { width: 80px; }
.c-mat { width: 45px; }
.c-line { width: 51px; }
.c-print { width: 59px; }
th { height: 24px; padding: 0; border-right: 1px solid #dde2ec; font-weight: 400; line-height: 24px; white-space: nowrap; overflow: hidden; }
td { height: 25px; padding: 0; text-align: center; line-height: 24px; white-space: nowrap; overflow: hidden; }
td > svg { margin: 0 auto; }
.halo { filter: drop-shadow(0 0 1px #fff); }
tbody tr { border-bottom: 1px solid #ebedf2; }
th.name { padding-left: 5px; text-align: left; }
td.name { padding-left: 11px; text-align: left; }
.last { padding-left: 6px; text-align: left; border: 0; }
.bold { font-weight: 500; }
.selected { background: #879eee; }
.swatch { display: block; width: 18px; height: 18px; margin: 0 auto; border: 1px solid #222; }
.black { background: #000; }
.red { background: #f00; }
.lime { background: #0f0; border-color: #fff; }
.dot { display: block; width: 18px; height: 18px; margin-left: 3px; border-radius: 50%; background: #f8f8f9; }
.lit { background: #fff; }
.h-scroll { height: 25px; padding: 7px 101px 0 26px; background: #efefef; }
.h-scroll span { display: block; height: 11px; background: #868686; }

/* Object snaps */
.osnap { display: flex; align-items: center; height: 41px; padding-left: 14px; position: relative; }
.osnap::before { content: ""; position: absolute; left: 4px; top: 7px; height: 31px; border-left: 3px double #c3cde0; }
.osnap label { display: flex; align-items: center; gap: 6px; white-space: nowrap; }
.n1 { width: 55px; }
.n2 { width: 74px; }
.n3 { width: 93px; }
.n4 { width: 112px; }
.n5 { width: 142px; }
.osnap input {
  appearance: none;
  flex: none;
  display: grid;
  place-items: center;
  width: 20px;
  height: 20px;
  margin: 0;
  border: 1px solid #6a6a6a;
  border-radius: 4px;
  background: #f4f4f4;
}
.osnap input:checked { border-color: #005fb8; background: #005fb8; }
.osnap input:checked::before { content: ""; width: 10px; height: 5px; margin-top: -3px; border: solid #fff; border-width: 0 0 1px 1px; transform: rotate(-45deg); }
.osnap .soft { padding-left: 2px; }
.osnap .soft input { border-color: #ccc; background: #fdfdfd; width: 18px; height: 18px; }

/* Status bar */
.status {
  display: grid;
  grid-template-columns: 109px 121px 121px 121px 121px 234px 172px 122px 124px 78px 166px 128px 155px 92px 8px 1fr;
  height: 31px;
  border-top: 1px solid #b9c3dc;
}
.status > * { border-right: 1px solid #bcc5dc; line-height: 32px; text-align: center; white-space: nowrap; overflow: hidden; }
.status > :last-child { border: 0; }
.status .layer { display: flex; align-items: center; gap: 3px; padding-left: 4px; }
.layer i { width: 23px; height: 22px; background: #000; }
.status .on { border-top: 1px solid #f2f4fa; background: #cfd7ee; font-weight: 700; line-height: 31px; }
.clip { text-align: left; }
```
